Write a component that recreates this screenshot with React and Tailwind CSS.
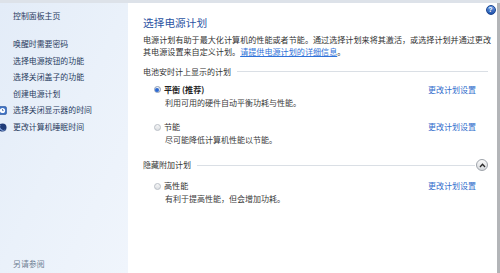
import React from "react";

const FONT = { fontFamily: '"Noto Sans CJK SC", "Noto Sans", sans-serif' };

function Radio({ checked }) {
  return checked ? (
    <span className="w-[7px] h-[7px] shrink-0 rounded-full border border-[#8d9cb3] bg-gradient-to-b from-[#f4f6fa] to-[#cfd6e0] flex items-center justify-center">
      <span className="w-[3.5px] h-[3.5px] rounded-full bg-[#2a68d4]" />
    </span>
  ) : (
    <span className="w-[7px] h-[7px] shrink-0 rounded-full border border-[#b9bec6] bg-gradient-to-b from-[#f7f7f7] to-[#dcdfe3]" />
  );
}

function Plan({ name, bold, desc, checked, mt, descMt }) {
  return (
    <div className={mt}>
      <div className="h-[12px] flex items-center pl-[10.5px] pr-[12px]">
        <Radio checked={checked} />
        <span
          className={`ml-[3.5px] text-[8.1px] leading-[12px] whitespace-nowrap ${
            bold ? "font-bold text-[#222]" : "text-[#333]"
          }`}
        >
          {name}
        </span>
        <span className="ml-auto text-[8px] leading-[12px] text-[#2f6ccc] whitespace-nowrap">
          更改计划设置
        </span>
      </div>
      <div className={`h-[12px] pl-[22px] text-[8px] leading-[12px] text-[#3a3a3a] whitespace-nowrap ${descMt}`}>
        {desc}
      </div>
    </div>
  );
}

function NavRow({ children, icon }) {
  return (
    <div className="h-[16.5px] flex items-center">
      <span className="w-[13px] shrink-0 flex items-center">{icon}</span>
      <span className="text-[7.9px] leading-[16.5px] text-[#283b5e] whitespace-nowrap">
        {children}
      </span>
    </div>
  );
}

export default function App() {
  return (
    <div className="w-[500px] h-[273px] overflow-hidden flex flex-col bg-white" style={FONT}>
      <div className="h-[3px] bg-[#dde2e9] shrink-0" />
      <div className="flex flex-1 min-h-0">
        {/* Left navigation pane */}
        <aside className="w-[128px] shrink-0 flex flex-col bg-gradient-to-br from-[#e3ecf8] via-[#eaf1fa] to-[#f0f5fc] pt-[5.4px] pb-[1px]">
          <NavRow>控制面板主页</NavRow>
          <div className="mt-[11.4px]">
            <NavRow>唤醒时需要密码</NavRow>
            <NavRow>选择电源按钮的功能</NavRow>
            <NavRow>选择关闭盖子的功能</NavRow>
            <NavRow>创建电源计划</NavRow>
            <NavRow
              icon={
                <svg width="9" height="9" viewBox="0 0 9 9" className="-ml-[2px]">
                  <rect x="0.5" y="0.5" width="8" height="8" rx="1.5" fill="#3f72c4" stroke="#27529a" strokeWidth="0.6" />
                  <circle cx="4.5" cy="4.5" r="2.6" fill="#ffffff" />
                  <path d="M4.5 3 V4.6 H5.7" stroke="#27529a" strokeWidth="0.7" fill="none" />
                </svg>
              }
            >
              选择关闭显示器的时间
            </NavRow>
            <NavRow
              icon={
                <svg width="9" height="9" viewBox="0 0 9 9" className="-ml-[2px]">
                  <circle cx="4.5" cy="4.5" r="4" fill="#1f3b78" />
                  <path d="M3.2 1.4 A3.4 3.4 0 1 0 7.8 6 A3 3 0 0 1 3.2 1.4 Z" fill="#8fb0e6" />
                </svg>
              }
            >
              更改计算机睡眠时间
            </NavRow>
          </div>
          <div className="mt-auto pl-[13px] h-[16.5px] text-[7.9px] leading-[16.5px] text-[#6f7f93] whitespace-nowrap">
            另请参阅
          </div>
        </aside>

        {/* Main content */}
        <main className="relative flex-1 min-w-0 flex flex-col pl-[15px] pr-[9px] pt-[13px]">
          <span className="absolute top-[1.5px] right-[1.5px] w-[10px] h-[10px] rounded-full bg-gradient-to-b from-[#6a9be6] to-[#1e50a8] border border-[#1a4490] text-white text-[7px] leading-[8px] font-bold flex items-center justify-center" style={{ fontFamily: '"Liberation Sans", sans-serif' }}>
            ?
          </span>

          <h1 className="h-[14px] text-[10.7px] leading-[14px] text-[#2b53a2] whitespace-nowrap font-normal">
            选择电源计划
          </h1>

          <div className="mt-[3.75px] text-[8.1px] leading-[12.5px] text-[#333] whitespace-nowrap">
            <div>电源计划有助于最大化计算机的性能或者节能。通过选择计划来将其激活，或选择计划并通过更改</div>
            <div>
              其电源设置来自定义计划。
              <span className="text-[#2f72d8] underline decoration-[0.6px] underline-offset-[1px]">请提供电源计划的详细信息</span>
              。
            </div>
          </div>

          <div className="mt-[7px] h-[12px] flex items-center">
            <span className="text-[8px] leading-[12px] text-[#333] whitespace-nowrap">电池安时计上显示的计划</span>
            <span className="ml-[6px] flex-1 h-px bg-[#dadfe5]" />
          </div>

          <Plan
            mt="mt-[6px]"
            descMt="mt-[1.5px]"
            checked
            bold
            name="平衡 (推荐)"
            desc="利用可用的硬件自动平衡功耗与性能。"
          />
          <Plan
            mt="mt-[12px]"
            descMt="mt-[1px]"
            name="节能"
            desc="尽可能降低计算机性能以节能。"
          />

          <div className="mt-[13px] h-[12px] flex items-center">
            <span className="text-[8px] leading-[12px] text-[#333] whitespace-nowrap">隐藏附加计划</span>
            <span className="ml-[6px] flex-1 h-px bg-[#dadfe5]" />
            <span className="ml-[1px] w-[12px] h-[12px] rounded-full border border-[#9ea3aa] bg-gradient-to-b from-[#fbfbfb] to-[#d4d7db] flex items-center justify-center">
              <svg width="7" height="5" viewBox="0 0 7 5">
                <path d="M1 4 L3.5 1.3 L6 4" stroke="#2a2a2a" strokeWidth="1.3" fill="none" />
              </svg>
            </span>
          </div>

          <Plan
            mt="mt-[9px]"
            descMt="mt-[1px]"
            name="高性能"
            desc="有利于提高性能，但会增加功耗。"
          />
        </main>

        <div className="w-[3px] shrink-0 bg-[#b3b5b8]" />
      </div>
    </div>
  );
}
